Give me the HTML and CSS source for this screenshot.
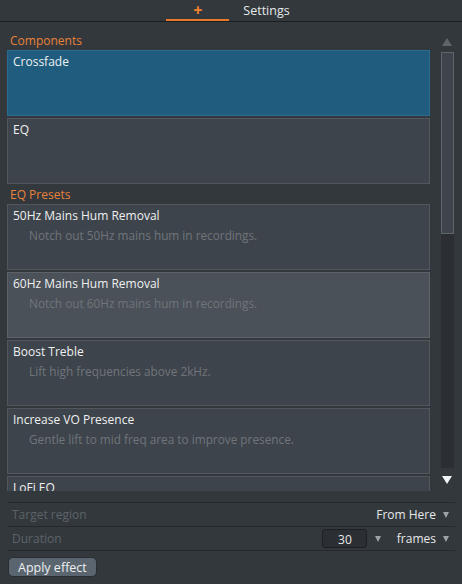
FILE: index.html
```html
<html>
	<head>
		<meta charset="UTF-8">
		<link rel="stylesheet" href="styles.css">
	</head>
	<body>
		<div class="tabs">
			<a class="tab sel"><span class="plus">+</span></a>
			<a class="tab">Settings</a>
		</div>
		<div class="main">
			<div class="list">
				<div class="head">Components</div>
				<div class="item blue"><div class="title">Crossfade</div></div>
				<div class="item"><div class="title">EQ</div></div>
				<div class="head">EQ Presets</div>
				<div class="item">
					<div class="title">50Hz Mains Hum Removal</div>
					<div class="desc">Notch out 50Hz mains hum in recordings.</div>
				</div>
				<div class="item hover">
					<div class="title">60Hz Mains Hum Removal</div>
					<div class="desc">Notch out 60Hz mains hum in recordings.</div>
				</div>
				<div class="item">
					<div class="title">Boost Treble</div>
					<div class="desc">Lift high frequencies above 2kHz.</div>
				</div>
				<div class="item">
					<div class="title">Increase VO Presence</div>
					<div class="desc">Gentle lift to mid freq area to improve presence.</div>
				</div>
				<div class="item">
					<div class="title">LoFi EQ</div>
				</div>
			</div>
			<div class="scroll">
				<div class="arrow up"></div>
				<div class="track"><div class="thumb"></div></div>
				<div class="arrow down"></div>
			</div>
		</div>
		<div class="footer">
			<div class="row">
				<span class="label">Target region</span>
				<span class="drop">From Here <i class="caret"></i></span>
			</div>
			<div class="row">
				<span class="label">Duration</span>
				<span class="num">30</span>
				<i class="caret gap"></i>
				<span class="drop">frames <i class="caret"></i></span>
			</div>
			<a class="btn">Apply effect</a>
		</div>
	</body>
</html>
```
FILE: styles.css
```css
body {
	margin: 0;
	background: #33383d;
	color: #e6e8ea;
	font-family: "Open Sans", sans-serif;
	font-size: 12px;
	height: 584px;
	overflow: hidden;
}
.tabs {
	height: 21px;
	border-bottom: solid 1px #1b1e21;
	display: flex;
	justify-content: center;
	padding-left: 8px;
}
.tab {
	height: 21px;
	line-height: 21px;
	padding: 0 14px;
	font-size: 12.5px;
	box-sizing: border-box;
}
.tab.sel {
	width: 63px;
	text-align: center;
	border-bottom: solid 2px #e8782a;
}
.plus {
	color: #f0822c;
	font-weight: bold;
	font-size: 16px;
}
.main {
	display: flex;
	height: 469px;
}
.list {
	width: 423px;
	padding: 10px 7px 0 7px;
	overflow: hidden;
}
.head {
	color: #e8823a;
	height: 18px;
	line-height: 18px;
	padding-left: 3px;
}
.item {
	height: 63px;
	border: solid 1px #51575d;
	background: #3e444b;
	margin-bottom: 2px;
	padding: 1px 5px 0 5px;
}
.item.blue {
	background: #1f5c7e;
	border-color: #2b6b8d;
}
.item.hover {
	background: #4b5158;
	border-color: #5c6268;
}
.title {
	line-height: 20px;
	color: #eef0f1;
}
.desc {
	color: #6f757b;
	padding-left: 16px;
	line-height: 18px;
	font-size: 11.8px;
}
.scroll {
	width: 20px;
	display: flex;
	flex-direction: column;
	align-items: center;
	padding-top: 16px;
	padding-right: 5px;
}
.arrow {
	width: 0;
	height: 0;
	border-left: 5px solid transparent;
	border-right: 5px solid transparent;
}
.up {
	border-bottom: 8px solid #5e656b;
	margin-bottom: 6px;
}
.down {
	border-top: 8px solid #f2f3f4;
	margin-top: 8px;
}
.track {
	width: 13px;
	height: 416px;
	background: #2b2f33;
}
.thumb {
	height: 182px;
	border: solid 1px #5e656b;
	background: #3e444b;
	box-sizing: border-box;
}
.footer {
	padding: 11px 7px 0 7px;
}
.row {
	display: flex;
	align-items: center;
	height: 23px;
	border-top: solid 1px #262a2e;
	padding: 0 6px 0 5px;
}
.row:last-of-type {
	border-bottom: solid 1px #262a2e;
}
.label {
	color: #5d6369;
	flex: 1;
}
.drop {
	display: flex;
	align-items: center;
}
.caret {
	display: inline-block;
	width: 0;
	height: 0;
	border-left: 3.5px solid transparent;
	border-right: 3.5px solid transparent;
	border-top: 6px solid #9ea3a8;
	margin-left: 7px;
}
.caret.gap {
	margin: 0 16px 0 8px;
}
.num {
	width: 45px;
	height: 19px;
	line-height: 19px;
	box-sizing: border-box;
	background: #2b2f33;
	border: solid 1px #1e2124;
	border-radius: 3px;
	text-align: right;
	padding-right: 14px;
}
.btn {
	display: inline-block;
	margin: 6px 0 0 1px;
	height: 20px;
	line-height: 19px;
	padding: 0 9px;
	box-sizing: border-box;
	border: solid 1px #2a2e32;
	border-radius: 5px;
	background: #5a6570;
	color: #eef0f1;
	font-size: 12.5px;
}
```
